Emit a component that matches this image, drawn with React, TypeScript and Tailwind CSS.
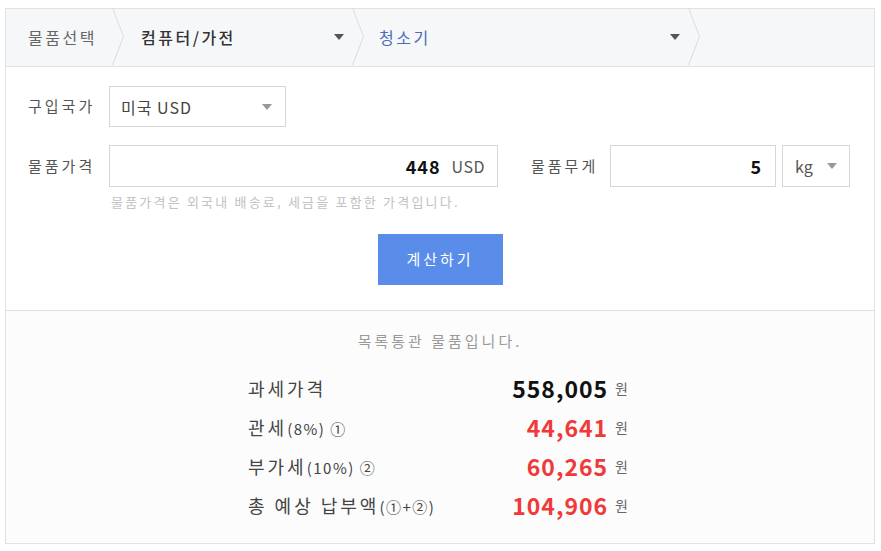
import type { ReactNode } from "react";

const font = { fontFamily: '"Noto Sans CJK KR", "Noto Sans", sans-serif' };

const Caret = ({ color = "#555" }: { color?: string }) => (
  <svg width="10" height="6" viewBox="0 0 10 6" className="shrink-0">
    <path d="M0 0h10L5 6z" fill={color} />
  </svg>
);

const Chevron = () => (
  <svg width="13" height="57" viewBox="0 0 13 57" className="shrink-0">
    <polyline points="0.5,0 11.5,28.5 0.5,57" fill="none" stroke="#dadce0" strokeWidth="1" />
  </svg>
);

const Row = ({ label, value, red }: { label: ReactNode; value: string; red?: boolean }) => (
  <div className="flex h-[39px] items-center">
    <div className="flex-1 text-[18px] tracking-[3px] text-[#444]">{label}</div>
    <div
      className={`text-[23px] font-bold tracking-[1px] ${red ? "text-[#f03a3a]" : "text-[#111]"}`}
    >
      {value}
    </div>
    <div className="ml-[7px] text-[14px] text-[#666]">원</div>
  </div>
);

export default function App() {
  return (
    <div className="min-h-screen bg-white pt-[8px] pl-[5px]" style={font}>
      <div className="w-[870px] border border-[#e1e1e1]">
        {/* breadcrumb */}
        <div className="flex h-[58px] items-center border-b border-[#e1e1e1] bg-[#f6f7f9] pb-[2px]">
          <div className="flex h-full w-[106px] items-center pl-[22px] text-[16px] tracking-[2.5px] text-[#666]">
            물품선택
          </div>
          <Chevron />
          <div className="flex h-full w-[227px] items-center justify-between pl-[16px] pr-[8px] text-[16px] font-medium tracking-[2.5px] text-[#333]">
            <span>컴퓨터/가전</span>
            <Caret />
          </div>
          <Chevron />
          <div className="flex h-full w-[323px] items-center justify-between pl-[14px] pr-[8px] text-[16px] tracking-[2.5px] text-[#4a6cb8]">
            <span>청소기</span>
            <Caret />
          </div>
          <Chevron />
        </div>

        {/* form */}
        <div className="border-b border-[#e1e1e1] bg-white pt-[19px] pb-[25px] pl-[22px]">
          <div className="flex items-center">
            <div className="w-[81px] text-[15px] tracking-[3px] text-[#555]">구입국가</div>
            <div className="flex h-[41px] w-[177px] items-center justify-between border border-[#d6d6d6] pl-[11px] pr-[13px] text-[16px] tracking-[1px] text-[#444]">
              <span>미국 USD</span>
              <Caret color="#999" />
            </div>
          </div>

          <div className="mt-[18px] flex items-center">
            <div className="w-[81px] text-[15px] tracking-[3px] text-[#555]">물품가격</div>
            <div className="flex h-[42px] w-[389px] items-center justify-end border border-[#d6d6d6] pr-[12px]">
              <span className="text-[18px] font-bold tracking-[1px] text-[#111]">448</span>
              <span className="ml-[11px] text-[16px] tracking-[0.5px] text-[#555]">USD</span>
            </div>
            <div className="ml-[33px] w-[79px] text-[15px] tracking-[3px] text-[#555]">물품무게</div>
            <div className="flex h-[42px] w-[166px] items-center justify-end border border-[#d6d6d6] pr-[14px]">
              <span className="text-[18px] font-bold text-[#111]">5</span>
            </div>
            <div className="ml-[6px] flex h-[42px] w-[68px] items-center justify-between border border-[#d6d6d6] pl-[12px] pr-[12px] text-[16px] text-[#555]">
              <span>kg</span>
              <Caret color="#999" />
            </div>
          </div>

          <div className="mt-[6px] pl-[83px] text-[13px] leading-[18px] tracking-[2.2px] text-[#c2c2c2]">
            물품가격은 외국내 배송료, 세금을 포함한 가격입니다.
          </div>

          <div className="mt-[23px] flex justify-center pr-[22px]">
            <button className="h-[51px] w-[125px] bg-[#5a8de9] text-[15px] tracking-[3px] text-white">
              계산하기
            </button>
          </div>
        </div>

        {/* result */}
        <div className="bg-[#fcfcfc] pt-[19px] pb-[18px]">
          <div className="text-center text-[15px] leading-[22px] tracking-[3px] text-[#9a9a9a]">
            목록통관 물품입니다.
          </div>
          <div className="mt-[17px] ml-[242px] w-[380px]">
            <Row label="과세가격" value="558,005" />
            <Row
              label={
                <>
                  관세<span className="text-[15px] tracking-[1.5px]">(8%) ①</span>
                </>
              }
              value="44,641"
              red
            />
            <Row
              label={
                <>
                  부가세<span className="text-[15px] tracking-[1.5px]">(10%) ②</span>
                </>
              }
              value="60,265"
              red
            />
            <Row
              label={
                <>
                  총 예상 납부액<span className="text-[15px] tracking-[1.5px]">(①+②)</span>
                </>
              }
              value="104,906"
              red
            />
          </div>
        </div>
      </div>
    </div>
  );
}
